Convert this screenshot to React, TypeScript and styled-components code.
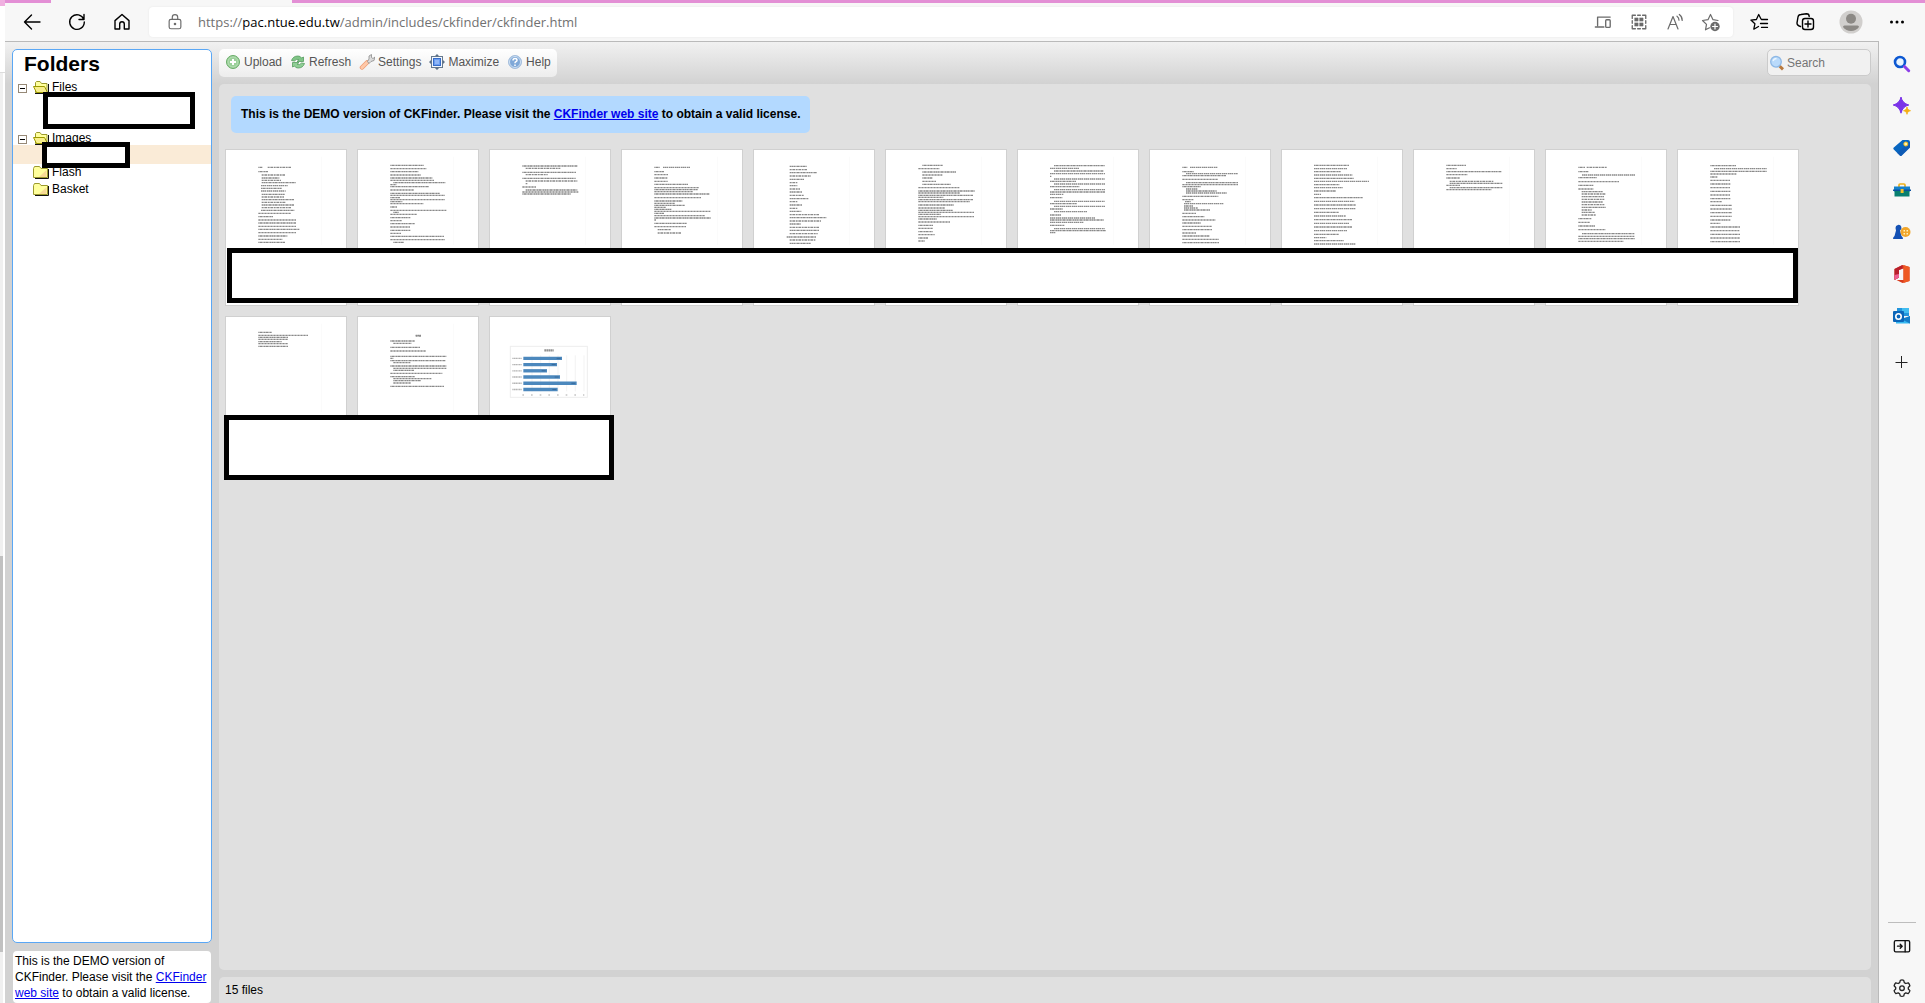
import React from 'react';
import styled, { createGlobalStyle } from 'styled-components';

const GlobalStyle = createGlobalStyle`
  * { box-sizing: border-box; }
  html, body, #root { height: 100%; }
  body {
    margin: 0;
    background: #f7f7f7;
    color: #000;
    font: 12px/16px "Liberation Sans", Arial, sans-serif;
    overflow: hidden;
  }
  svg { display: block; flex: none; }
  a { color: #0000ee; }
`;

/* ---------- window frame ---------- */

const Screen = styled.div`
  display: flex;
  height: 100vh;
`;

const BackgroundWindow = styled.div`
  display: flex;
  flex-direction: column;
  width: 5px;
  background: #f0f0f0;
`;

const BackgroundTab = styled.div`
  height: 6px;
  background: #f0b0e0;
`;

const BackgroundBar = styled.div`
  height: 67px;
  background: #fff;
  border-bottom: 1px solid #dcdcdc;
`;

const BackgroundTrack = styled.div`
  display: flex;
  flex-direction: column;
  justify-content: flex-end;
  flex: 1;
  padding-bottom: 51px;
  border-right: 2px solid #fff;
`;

const BackgroundThumb = styled.div`
  height: 45%;
  max-height: 396px;
  background: #c1c1c1;
`;

const Browser = styled.div`
  display: flex;
  flex-direction: column;
  flex: 1;
  min-width: 0;
  background: #f7f7f7;
`;

const TabStrip = styled.div`
  display: flex;
  height: 3px;
  background: #e38fd5;
`;

const ActiveTab = styled.div`
  width: 241px;
  margin-left: 46px;
  background: #f7f7f7;
`;

const NavBar = styled.header`
  display: flex;
  align-items: center;
  height: 38px;
  padding-left: 15px;
  padding-right: 16px;
`;

const NavButtons = styled.nav`
  display: flex;
  gap: 21px;
  width: 129px;
`;

const IconButton = styled.button`
  display: grid;
  place-items: center;
  width: 24px;
  height: 24px;
  padding: 0;
  border: 0;
  background: none;
  color: inherit;
`;

const AddressBar = styled.div`
  display: flex;
  align-items: center;
  flex: 1;
  height: 30px;
  padding: 0 10px 0 14px;
  border-radius: 4px;
  background: #fff;
  box-shadow: 0 0 2px #e4e4e4;
  color: #6b6b6b;
`;

const Url = styled.div`
  flex: 1;
  padding-left: 11px;
  font: 13px/20px "Open Sans", sans-serif;
  color: #717171;
  strong { font-weight: 400; color: #000; }
`;

const AddressActions = styled.div`
  display: flex;
  gap: 12px;
`;

const ProfileActions = styled.div`
  display: flex;
  gap: 22px;
  padding-left: 14px;
`;

const Body = styled.div`
  display: flex;
  flex: 1;
  min-height: 0;
`;

const Sidebar = styled.aside`
  display: flex;
  flex-direction: column;
  justify-content: space-between;
  align-items: center;
  width: 46px;
  padding: 11px 0 3px;
`;

const SidebarGroup = styled.div<{ $divided?: boolean }>`
  display: flex;
  flex-direction: column;
  align-items: center;
  gap: 18px;
  width: 28px;
  ${p => p.$divided && 'border-top: 1px solid #bdbdbd; padding-top: 11px;'}
`;

const AddButton = styled(IconButton)`
  margin-top: 4px;
`;

/* ---------- file manager ---------- */

const Finder = styled.main`
  display: flex;
  flex: 1;
  min-width: 0;
  gap: 7px;
  padding: 7px 7px 0;
  border: solid #bababa;
  border-width: 1px 1px 0 0;
  background: linear-gradient(#f1f1f1 0, #d2d2d2 42px) #d2d2d2;
`;

const FolderColumn = styled.div`
  display: flex;
  flex-direction: column;
  gap: 8px;
  width: 200px;
`;

const FolderPanel = styled.section`
  flex: 1;
  padding-top: 2px;
  border: 1px solid #5aa7f5;
  border-radius: 5px;
  background: #fff;
`;

const PanelTitle = styled.h2`
  margin: 0 0 2px;
  padding-left: 11px;
  font-size: 21px;
  line-height: 24px;
`;

const Tree = styled.ul`
  margin: 0;
  padding: 0;
  list-style: none;
`;

const TreeItem = styled.li`
  position: relative;
`;

const TreeRow = styled.div`
  display: flex;
  align-items: center;
  height: 17px;
  padding-left: 5px;
`;

const Expander = styled.button`
  width: 9px;
  height: 9px;
  margin: 3px 6px 0 0;
  padding: 3px 1px;
  border: 1px solid #968977;
  background: #000 content-box;
`;

const ExpanderSpace = styled.span`
  width: 15px;
`;

const FolderName = styled.span`
  padding-left: 3px;
`;

const HiddenRows = styled.div`
  height: 34px;
`;

const SelectedRow = styled.div`
  height: 19px;
  margin: -1px 0;
  background: #faebd7;
`;

const Redaction = styled.div<{ $top: number; $left: number; $right: number; $height: number }>`
  position: absolute;
  z-index: 1;
  top: ${p => p.$top}px;
  left: ${p => p.$left}px;
  right: ${p => p.$right}px;
  height: ${p => p.$height}px;
  border: 5px solid #000;
  background: #fff;
`;

const LicenseNote = styled.p`
  height: 52px;
  margin: 0 1px;
  padding: 2px;
  border-radius: 4px;
  background: #fff;
`;

const FilesColumn = styled.div`
  display: flex;
  flex-direction: column;
  flex: 1;
  min-width: 0;
  gap: 7px;
`;

const TopRow = styled.div`
  display: flex;
  justify-content: space-between;
  height: 28px;
`;

const Toolbar = styled.div`
  display: flex;
  align-items: center;
  gap: 8px;
  padding: 0 6px 2px;
  border-radius: 5px;
  background: linear-gradient(#fff, #ededed);
`;

const Tool = styled.button`
  display: flex;
  align-items: center;
  gap: 3px;
  padding: 0;
  border: 0;
  background: none;
  font: inherit;
  color: #555;
`;

const SearchBox = styled.label`
  display: flex;
  align-items: center;
  gap: 2px;
  width: 104px;
  height: 27px;
  padding-left: 1px;
  border: 1px solid #cbcbcb;
  border-radius: 5px;
  background: #f1f1f1;
`;

const SearchInput = styled.input`
  flex: 1;
  min-width: 0;
  padding: 0;
  border: 0;
  background: none;
  font: inherit;
  &::placeholder { color: #757575; opacity: 1; }
`;

const FilesPanel = styled.section`
  flex: 1;
  min-height: 0;
  padding: 12px 6px;
  border-radius: 5px;
  background: #e0e0e0;
`;

const Message = styled.p`
  width: fit-content;
  margin: 0 6px 16px;
  padding: 10px 10px 11px;
  border-radius: 5px;
  background: #b3d9ff;
  font-weight: 700;
`;

const ThumbRow = styled.div`
  position: relative;
  display: flex;
  gap: 10px;
  width: fit-content;
  margin-bottom: 10px;
`;

const Thumb = styled.figure`
  width: 122px;
  height: 157px;
  margin: 0;
  border: 1px solid #d0d0d0;
  background: #fff;
`;

const StatusBar = styled.footer`
  height: 26px;
  padding: 5px 6px;
  border-radius: 5px 5px 0 0;
  background: #e0e0e0;
`;

/* ---------- document previews: "y from to" for each line of text ---------- */

type Page = { x: number; y: number; lines: string };

const firstRow: Page[] = [
  { x: 33, y: 30, lines: '82 130 143,82 158 230,95 130 160,105 140 210,114 140 193,121 140 198,128 140 243,137 138 218,145 138 200,153 138 212,163 140 210,171 140 207,179 140 238,187 140 213,195 140 237,203 140 228,211 138 238,220 130 228,230 130 174,240 130 243,249 130 243,259 130 243,268 130 253,278 130 243,288 130 217,298 130 203,307 130 210' },
  { x: 429, y: 30, lines: '76 526 626,86 526 635,95 526 610,105 526 618,114 526 652,121 526 657,128 535 691,134 526 545,140 526 642,150 526 597,160 526 675,166 526 690,173 526 555,179 526 690,185 526 562,191 526 626,201 526 546,211 526 695,217 535 551,223 526 606,233 526 586,242 526 562,251 526 600,261 526 586,271 526 586,280 526 558,289 526 687,299 526 690,307 535 567' },
  { x: 825, y: 30, lines: '78 922 1088,85 932 1036,97 922 1083,104 932 998,115 922 1082,123 932 1087,131 932 938,141 922 963,150 932 1087,156 922 1091,162 922 1067' },
  { x: -39, y: 30, lines: '82 58 75,82 84 165,95 58 88,104 58 99,114 58 98,124 58 98,133 58 160,143 58 192,149 58 188,155 58 174,162 58 223,173 58 198,183 58 143,190 58 120,196 58 150,202 58 94,208 58 110,214 58 227,220 58 87,227 58 210,234 58 228,240 58 64,250 58 155,260 58 153,269 68 108,279 68 140' },
  { x: 357, y: 30, lines: '79 464 516,89 464 517,98 464 546,108 464 528,118 464 507,128 464 488,137 464 487,147 464 495,156 464 501,166 464 507,176 464 521,185 464 487,195 464 501,205 464 487,214 464 499,224 464 552,233 464 574,243 464 558,252 464 497,262 464 552,271 464 552,281 464 548,291 455 543,300 464 542,310 464 528' },
  { x: 753, y: 30, lines: '76 862 923,86 850 913,96 862 963,105 862 923,114 862 893,124 862 903,133 862 948,143 850 973,153 850 1019,159 850 975,166 850 1014,172 850 925,179 850 1014,185 850 1005,195 850 957,204 850 930,211 850 954,217 850 1018,223 850 918,230 850 1017,237 850 905,246 850 945,256 850 894,265 850 894,275 850 893,284 850 899,294 850 880,303 850 870' },
  { x: 24, y: 30, lines: '77 132 285,85 120 207,93 132 280,101 120 285,109 120 125,117 132 284,124 120 198,132 132 285,140 120 208,149 132 285,156 120 285,163 120 160,173 120 157,184 132 284,191 120 201,199 132 285,207 120 158,215 132 231,225 120 153,234 120 256,240 120 281,247 120 221,256 120 163,266 132 284,272 120 288,278 120 137' },
  { x: 420, y: 30, lines: '82 517 532,82 540 623,95 517 552,101 528 684,107 517 648,118 517 625,128 528 684,134 517 684,140 517 573,147 528 564,153 528 620,159 528 650,169 517 625,179 517 550,185 525 543,191 522 641,198 522 549,204 522 564,210 522 600,220 517 558,230 517 583,240 517 616,249 517 572,259 517 606,269 517 606,279 517 558,288 517 599,298 517 627,308 517 627' },
  { x: 816, y: 30, lines: '76 912 1017,86 912 1012,95 912 992,105 912 1027,115 912 1032,124 912 1077,134 912 988,143 912 998,153 912 978,163 912 933,173 912 1058,184 912 1033,195 912 1038,206 912 1038,217 912 987,228 912 1007,239 912 1027,250 912 1017,261 912 1027,272 912 1012,283 912 987,293 912 949,302 912 1002,312 912 1038' },
  { x: 42, y: 30, lines: '76 139 198,86 139 170,95 139 304,104 139 203,114 139 180,124 149 280,130 149 308,136 139 180,143 149 308,149 139 274' },
  { x: 438, y: 30, lines: '82 535 555,82 560 621,95 535 566,105 546 705,113 535 591,125 535 657,136 535 580,147 535 580,155 545 608,162 545 618,170 545 613,178 545 613,186 545 608,194 545 613,202 545 618,210 545 575,217 545 585,225 545 588,236 535 575,247 535 571,258 535 585,269 535 617,281 546 703,289 535 704,296 535 705,304 535 670' },
  { x: 834, y: 30, lines: '77 931 1008,86 942 1100,94 931 1101,102 931 1010,111 931 952,121 931 991,132 931 991,143 931 991,154 931 991,165 931 991,176 931 991,185 931 967,196 931 996,207 931 996,218 931 996,229 931 996,240 931 991,250 931 961,261 931 1021,272 931 1018,283 931 1021,294 931 1021,305 931 1021' },
];

const secondRow: Page[] = [
  { x: 33, y: 51, lines: '97 130 171,106 130 280,112 130 220,118 130 220,125 130 200,131 130 220,139 130 220' },
  { x: 429, y: 51, lines: '106 602 618,108 602 618,123 526 600,130 535 590,142 526 616,153 526 632,169 526 694,175 526 536,182 526 691,188 535 586,198 526 694,205 535 694,211 535 597,220 526 682,230 526 600,236 535 650,242 535 618,249 535 588,259 526 687' },
];

const Preview = ({ page }: { page: Page }) => (
  <svg width="120" height="98" viewBox={`${page.x} ${page.y} 360 294`} aria-hidden="true">
    <path d={`M${page.x + 286} ${page.y + 20}v265`} stroke="#fbfbfb" strokeWidth="3" />
    {page.lines.split(',').map((line, i) => {
      const [y, from, to] = line.split(' ').map(Number);
      return (
        <path key={i} d={`M${from} ${y}H${to}`} stroke="#8a8a8a" strokeWidth="4"
          strokeDasharray={i % 2 ? '5 1 3 1 6 2' : '4 1 7 1 3 1'} />
      );
    })}
  </svg>
);

const chartBars = [1041, 1026, 996, 1035, 1085, 1028];

const ChartPreview = () => (
  <svg width="120" height="98" viewBox="825 51 360 294" aria-label="Bar chart">
    <rect x="886" y="139" width="231" height="153" fill="#fff" stroke="#eeeeee" strokeWidth="3" />
    {[951, 977, 1003, 1029, 1055, 1081, 1107].map(x => (
      <path key={x} d={`M${x} 166v108`} stroke="#ededed" strokeWidth="2" />
    ))}
    <path d="M988 151h28" stroke="#909090" strokeWidth="7" strokeDasharray="5 1" />
    {chartBars.map((end, i) => (
      <g key={i}>
        <path d={`M892 ${175 + i * 18.7}h28`} stroke="#b5b5b5" strokeWidth="4" strokeDasharray="4 1" />
        <path d={`M925 ${175 + i * 18.7}H${end}`} stroke="#4c88bd" strokeWidth="10" />
        <path d={`M${end - 16} ${175 + i * 18.7}h12`} stroke="#37699a" strokeWidth="3" />
      </g>
    ))}
    <path d="M922 285h186" stroke="#c5c5c5" strokeWidth="4" strokeDasharray="5 21" />
  </svg>
);

/* ---------- icons ---------- */

const Line = ({ size = 20, width = 1.2, color = 'currentColor', children }: {
  size?: number; width?: number; color?: string; children: React.ReactNode;
}) => (
  <svg width={size} height={size} viewBox="0 0 20 20" fill="none" stroke={color} strokeWidth={width}
    strokeLinecap="round" strokeLinejoin="round" aria-hidden="true">{children}</svg>
);

const BackIcon = () => <Line width={1.4}><path d="M18 10H2.500M9.500 3l-7 7 7 7" /></Line>;
const ReloadIcon = () => <Line width={1.4}><path d="M16.8 7.4A7.3 7.3 0 1 0 17.3 10M17 2.5v5h-5" /></Line>;
const HomeIcon = () => <Line width={1.4}><path d="M3 8.6L10 2.5l7 6.1V17h-4.7v-5a2.3 2.3 0 0 0-4.6 0v5H3z" /></Line>;
const LockIcon = () => (
  <Line size={18} width={1.3}>
    <rect x="3.5" y="7" width="13" height="10.5" rx="2" /><path d="M7 7V4.8a3 3 0 0 1 6 0V7" />
    <circle cx="10" cy="12.2" r=".8" fill="currentColor" />
  </Line>
);
const DevicesIcon = () => (
  <Line size={18} width={1.5}><path d="M4 14V4.500h14M1.500 15.500h9.500" /><rect x="13" y="7.500" width="5" height="8.500" rx="1" /></Line>
);
const QrIcon = () => (
  <Line size={18} width={1.5}>
    <path d="M2.500 6V2.500H6M14 2.500h3.500V6M17.500 14v3.500H14M6 17.500H2.500V14M8.500 2.500h3M8.500 17.500h3M2.500 8.500v3M17.500 8.500v3" />
    <path d="M5.500 5.500h3.500v3.500H5.500zM11 5.500h3.500v3.500H11zM5.500 11h3.500v3.500H5.500zM11 11h3.500v3.500H11z" fill="currentColor" strokeWidth=".6" />
  </Line>
);
const ReadIcon = () => (
  <Line><path d="M3 17L8 4.500 13 17M4.800 12.500h6.500M12 4.200a5 5 0 0 1 2 4M14.300 2.500a7 7 0 0 1 2.900 6" /></Line>
);
const StarAddIcon = () => (
  <Line>
    <path d="M17 8.500l-5-.8L9.500 2.500 7 7.700l-5.500.8 4 3.900-1 5.400 4-2" />
    <circle cx="14" cy="14.500" r="4.700" fill="currentColor" stroke="none" />
    <path d="M14 12v5M11.500 14.500h5" stroke="#fff" />
  </Line>
);
const FavoritesIcon = () => (
  <Line width={1.3}><path d="M12 7L9.700 2.500 7.400 7.500l-5.500.6 4 3.700-1.100 5.400 4.700-2.700M12.500 7.500h6M11.500 11.500h7M12.500 15.400h6" /></Line>
);
const CollectionsIcon = () => (
  <Line width={1.4}>
    <path d="M5.500 14.500C3 13.800 1.800 13 2 10.800L3 5c.3-1.600 1.300-2.500 3-2.500l5.500-.7c1.800 0 2.700.8 2.700 2.700" />
    <rect x="7.500" y="6.500" width="11" height="11" rx="2.500" /><path d="M13 9v6M10 12h6" />
  </Line>
);
const Avatar = () => (
  <svg width="24" height="24" viewBox="0 0 24 24" aria-hidden="true">
    <circle cx="12" cy="12" r="11.500" fill="#d1cfcd" />
    <circle cx="12" cy="8.800" r="5" fill="#8c8985" />
    <path d="M4 17q0-1.500 1.500-1.500h13q1.500 0 1.500 1.500a10 10 0 0 1-16 0z" fill="#8c8985" />
  </svg>
);
const MoreIcon = () => (
  <svg width="16" height="4" aria-hidden="true"><circle cx="2.500" cy="2" r="1.500" /><circle cx="8" cy="2" r="1.500" /><circle cx="13.500" cy="2" r="1.500" /></svg>
);

const SideSvg = ({ children }: { children: React.ReactNode }) => (
  <svg width="18" height="18" viewBox="0 0 18 18" aria-hidden="true">{children}</svg>
);
const SearchSide = () => (
  <SideSvg>
    <circle cx="7" cy="7" r="5" fill="#e9f5ff" stroke="#0d58d2" strokeWidth="2.600" />
    <path d="M11.500 11.500l4.200 4.200" stroke="#8c3fe8" strokeWidth="3" strokeLinecap="round" />
  </SideSvg>
);
const SparkSide = () => (
  <SideSvg>
    <path d="M8 0q1.300 6.300 7.800 8Q9.500 9.500 8 16.200 6.500 9.500.2 8 6.700 6.300 8 0z" fill="#7b34e8" stroke="#7b34e8" strokeLinejoin="round" />
    <path d="M14 10c.6 2.300 1.200 3 3.500 3.700-2.300.6-2.900 1.200-3.500 3.600-.6-2.400-1.200-3-3.500-3.600 2.300-.7 2.900-1.400 3.500-3.700z" fill="#f5ae13" stroke="#f5ae13" strokeWidth=".8" />
  </SideSvg>
);
const TagSide = () => (
  <SideSvg>
    <path d="M9.500 1H15q2 0 2 2v5.500L8.800 16.500q-1 1-2 0L.8 10.400q-1-1 0-2z" fill="#0866c0" />
    <path d="M17 3v5.500L8.800 16.500q-1 1-2 0L4 14z" fill="#1650aa" opacity=".5" />
    <circle cx="12.800" cy="5" r="2" fill="#fff2b0" stroke="#f5bd16" />
  </SideSvg>
);
const ToolboxSide = () => (
  <SideSvg>
    <path d="M6 6V4q0-1 1-1h4q1 0 1 1v2" fill="none" stroke="#eeb11c" strokeWidth="1.700" />
    <path d="M1 5.500h16v5H1z" fill="#1481cb" /><path d="M1.500 10h15v5.500h-15z" fill="#087f70" />
    <path d="M0 8.500h18V10H0z" fill="#0b519f" /><path d="M7.600 8h3v4h-3z" fill="#f1c02b" />
  </SideSvg>
);
const GamesSide = () => (
  <SideSvg>
    <path d="M2.500 5a3 3 0 1 1 4.500 2.500L8.500 13q1.500 1 1.500 3H0q0-2 1.500-3L3 7.500z" fill="#1451b4" />
    <circle cx="12.500" cy="9" r="5" fill="#f1a62b" />
    <path d="M10.500 7h1.500v1.500h-1.500zM13.500 7H15v1.500h-1.500zM10.500 10h1.500v1.500h-1.500zM13.500 10H15v1.500h-1.500z" fill="#fff1be" />
  </SideSvg>
);
const OfficeSide = () => (
  <SideSvg>
    <path d="M9.500 0L16.500 2v14l-7 2-6-3h7V3.500L6 5v7.500L1.500 15V4z" fill="#d83b1d" />
    <path d="M10.500 0l6 2v14l-6 2z" fill="#ee5a24" /><path d="M1.500 4L9.500 0v3.500L6 5v7.500L1.500 15z" fill="#b91f2c" />
    <path d="M1.500 10v5L6 12.500V9z" fill="#ee5f92" />
  </SideSvg>
);
const OutlookSide = () => (
  <SideSvg>
    <path d="M4 1h12v8H4z" fill="#2295dc" /><path d="M9 1h7v5H9z" fill="#42bdf0" />
    <path d="M3 9l7 4 7-4v7.500H3z" fill="#35b8f1" /><path d="M17 9v7.500L8 12z" fill="#157dc8" />
    <rect x="0" y="4" width="11" height="11" rx="1" fill="#0b66b9" />
    <circle cx="5.500" cy="9.500" r="2.700" fill="none" stroke="#fff" strokeWidth="1.600" />
  </SideSvg>
);
const PlusIcon = () => <SideSvg><path d="M8.500 3v12M2.500 9.500h12" stroke="#222" /></SideSvg>;
const PanelIcon = () => (
  <Line size={18} width={1.500} color="#111"><rect x="1.500" y="4" width="17" height="12.500" rx="1.500" /><path d="M13.500 4v12.500M5 10.200h4.500M8 8l2.200 2.200L8 12.500" /></Line>
);
const GearIcon = () => (
  <Line size={20} width={1.300} color="#222">
    <path d="M8.300 2.300q1.700-.7 3.400 0l.6 2.300 1.500.9 2.400-.7q1.300 1.300 1.700 3L16.300 9.500v1.500l1.600 1.600q-.4 1.700-1.700 3l-2.400-.7-1.500.9-.6 2.200q-1.700.6-3.400 0l-.6-2.200-1.500-.9-2.400.7q-1.300-1.300-1.700-3L3.700 11V9.500L2.100 7.800q.4-1.700 1.700-3l2.400.7 1.500-.9z" />
    <circle cx="10" cy="10.200" r="2.300" />
  </Line>
);

const ToolSvg = ({ children }: { children: React.ReactNode }) => (
  <svg width="16" height="16" viewBox="0 0 16 16" fill="none" aria-hidden="true">{children}</svg>
);
const UploadIcon = () => (
  <ToolSvg>
    <circle cx="8" cy="8" r="6.500" fill="#9bd09a" stroke="#69ad68" />
    <circle cx="8" cy="8" r="5" stroke="#b6dfb5" /><path d="M8 5v6M5 8h6" stroke="#fff" strokeWidth="2" />
  </ToolSvg>
);
const RefreshIcon = () => (
  <ToolSvg>
    <path d="M1.500 6.500Q3 2 8 2q2.500 0 3.500 2L13.500 3v4.500H7L9 5.700Q6 4.500 4.500 7z" fill="#7fc486" stroke="#559d60" strokeWidth=".8" />
    <path d="M14.500 9.500Q13 14 8 14q-2.500 0-3.500-2L2.500 13V8.500H9L7 10.300q3 1.200 4.500-1.300z" fill="#8fce95" stroke="#559d60" strokeWidth=".8" />
  </ToolSvg>
);
const SettingsIcon = () => (
  <ToolSvg>
    <path d="M8 8.500L3 13.500" stroke="#ee9d75" strokeWidth="4.500" strokeLinecap="round" />
    <path d="M8 8.500L3 13.500" stroke="#ffc9a9" strokeWidth="3" strokeLinecap="round" />
    <path d="M8.500 7.500L10 5V2L12.500.5v3l1.500 1 2-1.500-1 3.500-3 1-2 2z" fill="#dcdcdc" stroke="#8a8a8a" strokeWidth=".8" />
  </ToolSvg>
);
const MaximizeIcon = () => (
  <ToolSvg>
    <path d="M8 0l3 3H5zM8 16l-3-3h6zM0 8l3-3v6zM16 8l-3 3V5z" fill="#5c7086" />
    <rect x="2.500" y="2.500" width="11" height="11" fill="#f3f7fc" stroke="#66798d" />
    <rect x="4.500" y="4.500" width="7" height="7" fill="#6a9df2" stroke="#376dc9" />
    <path d="M6 7h4M6 9h4" stroke="#b6d0fb" />
  </ToolSvg>
);
const HelpIcon = () => (
  <ToolSvg>
    <circle cx="8" cy="8" r="6.500" fill="#7fa8d8" stroke="#a6bfdd" /><circle cx="8" cy="8" r="5.500" stroke="#d0e1f3" />
    <path d="M6 6.500q0-2 2-2t2 1.700q0 1-1.200 1.500Q8 8 8 9.200M8 10.500V12" stroke="#fff" strokeWidth="1.500" />
  </ToolSvg>
);
const MagnifierIcon = () => (
  <ToolSvg>
    <path d="M10.500 11l3.500 3.300" stroke="#b8793d" strokeWidth="3" />
    <circle cx="7" cy="6.800" r="5.300" fill="#b9dafb" stroke="#8eb8e5" strokeWidth="1.300" />
    <path d="M4 6q1-2.500 3.500-2.500" stroke="#edf7ff" strokeWidth="1.300" />
  </ToolSvg>
);

const FolderIcon = ({ open }: { open?: boolean }) => (
  <svg width="16" height="14" viewBox="0 0 16 14" aria-hidden="true">
    <path d="M15.500 4v9.500H2" fill="none" stroke="#111" />
    {open ? (
      <>
        <path d="M2.500 12.500v-10l1-1H7l1.500 2h5.500v9z" fill="#ffff9c" stroke="#9c9a2e" />
        <path d="M.5 6.500h11l3 6h-11z" fill="#f8ee8c" stroke="#9c9a00" />
      </>
    ) : (
      <>
        <path d="M.5 12.500v-9l1-2h5l1.500 2h6.500v9z" fill="#ffff9c" stroke="#9c9a2e" />
        <path d="M6 12l7.500-7v7z" fill="#f5cd93" opacity=".75" />
      </>
    )}
  </svg>
);

/* ---------- page ---------- */

const sideApps = [
  { name: 'Search', Icon: SearchSide }, { name: 'Discover', Icon: SparkSide },
  { name: 'Shopping', Icon: TagSide }, { name: 'Tools', Icon: ToolboxSide },
  { name: 'Games', Icon: GamesSide }, { name: 'Office', Icon: OfficeSide },
  { name: 'Outlook', Icon: OutlookSide },
];

const tools = [
  { name: 'Upload', Icon: UploadIcon }, { name: 'Refresh', Icon: RefreshIcon },
  { name: 'Settings', Icon: SettingsIcon }, { name: 'Maximize', Icon: MaximizeIcon },
  { name: 'Help', Icon: HelpIcon },
];

const Folder = ({ name, open }: { name: string; open?: boolean }) => (
  <TreeRow>
    {open ? <Expander aria-label={`Collapse ${name}`} /> : <ExpanderSpace />}
    <FolderIcon open={open} />
    <FolderName>{name}</FolderName>
  </TreeRow>
);

const SiteLink = () => <a href="#site">CKFinder web site</a>;

export default function App() {
  return (
    <Screen>
      <GlobalStyle />
      <BackgroundWindow>
        <BackgroundTab />
        <BackgroundBar />
        <BackgroundTrack><BackgroundThumb /></BackgroundTrack>
      </BackgroundWindow>
      <Browser>
        <TabStrip><ActiveTab /></TabStrip>
        <NavBar>
          <NavButtons>
            <IconButton aria-label="Back"><BackIcon /></IconButton>
            <IconButton aria-label="Reload"><ReloadIcon /></IconButton>
            <IconButton aria-label="Home"><HomeIcon /></IconButton>
          </NavButtons>
          <AddressBar>
            <IconButton aria-label="Site information"><LockIcon /></IconButton>
            <Url>https://<strong>pac.ntue.edu.tw</strong>/admin/includes/ckfinder/ckfinder.html</Url>
            <AddressActions>
              <IconButton aria-label="Devices"><DevicesIcon /></IconButton>
              <IconButton aria-label="QR code"><QrIcon /></IconButton>
              <IconButton aria-label="Read aloud"><ReadIcon /></IconButton>
              <IconButton aria-label="Add to favorites"><StarAddIcon /></IconButton>
            </AddressActions>
          </AddressBar>
          <ProfileActions>
            <IconButton aria-label="Favorites"><FavoritesIcon /></IconButton>
            <IconButton aria-label="Collections"><CollectionsIcon /></IconButton>
            <IconButton aria-label="Profile"><Avatar /></IconButton>
            <IconButton aria-label="More"><MoreIcon /></IconButton>
          </ProfileActions>
        </NavBar>
        <Body>
          <Finder>
            <FolderColumn>
              <FolderPanel>
                <PanelTitle>Folders</PanelTitle>
                <Tree>
                  <TreeItem>
                    <Folder name="Files" open />
                    <HiddenRows />
                    <Redaction $top={14} $left={30} $right={16} $height={37} />
                  </TreeItem>
                  <TreeItem>
                    <Folder name="Images" open />
                    <SelectedRow />
                    <Redaction $top={13} $left={29} $right={81} $height={26} />
                  </TreeItem>
                  <TreeItem><Folder name="Flash" /></TreeItem>
                  <TreeItem><Folder name="Basket" /></TreeItem>
                </Tree>
              </FolderPanel>
              <LicenseNote>
                This is the DEMO version of CKFinder. Please visit the <SiteLink /> to obtain a valid license.
              </LicenseNote>
            </FolderColumn>
            <FilesColumn>
              <TopRow>
                <Toolbar>
                  {tools.map(({ name, Icon }) => <Tool key={name}><Icon />{name}</Tool>)}
                </Toolbar>
                <SearchBox>
                  <MagnifierIcon />
                  <SearchInput type="text" placeholder="Search" aria-label="Search" />
                </SearchBox>
              </TopRow>
              <FilesPanel>
                <Message>
                  This is the DEMO version of CKFinder. Please visit the <SiteLink /> to obtain a valid license.
                </Message>
                <ThumbRow>
                  {firstRow.map((page, i) => <Thumb key={i}><Preview page={page} /></Thumb>)}
                  <Redaction $top={99} $left={2} $right={1} $height={55} />
                </ThumbRow>
                <ThumbRow>
                  {secondRow.map((page, i) => <Thumb key={i}><Preview page={page} /></Thumb>)}
                  <Thumb><ChartPreview /></Thumb>
                  <Redaction $top={99} $left={-1} $right={-3} $height={65} />
                </ThumbRow>
              </FilesPanel>
              <StatusBar>15 files</StatusBar>
            </FilesColumn>
          </Finder>
          <Sidebar>
            <SidebarGroup>
              {sideApps.map(({ name, Icon }) => (
                <IconButton key={name} aria-label={name}><Icon /></IconButton>
              ))}
              <AddButton aria-label="Add"><PlusIcon /></AddButton>
            </SidebarGroup>
            <SidebarGroup $divided>
              <IconButton aria-label="Hide sidebar"><PanelIcon /></IconButton>
              <IconButton aria-label="Settings"><GearIcon /></IconButton>
            </SidebarGroup>
          </Sidebar>
        </Body>
      </Browser>
    </Screen>
  );
}
